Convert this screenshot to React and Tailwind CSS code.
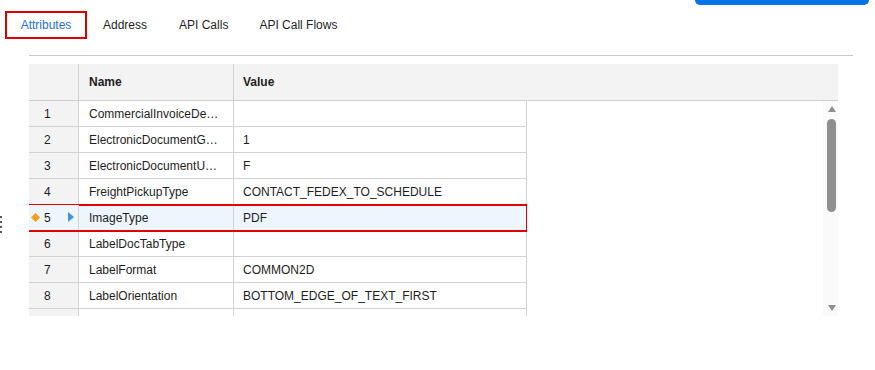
import React from 'react';

const tabs = ['Attributes', 'Address', 'API Calls', 'API Call Flows'];

const rows = [
  { n: 1, name: 'CommercialInvoiceDe…', value: '' },
  { n: 2, name: 'ElectronicDocumentG…', value: '1' },
  { n: 3, name: 'ElectronicDocumentU…', value: 'F' },
  { n: 4, name: 'FreightPickupType', value: 'CONTACT_FEDEX_TO_SCHEDULE' },
  { n: 5, name: 'ImageType', value: 'PDF', selected: true },
  { n: 6, name: 'LabelDocTabType', value: '' },
  { n: 7, name: 'LabelFormat', value: 'COMMON2D' },
  { n: 8, name: 'LabelOrientation', value: 'BOTTOM_EDGE_OF_TEXT_FIRST' },
  { n: 9, name: '', value: '' },
];

function Row({ row }) {
  const sel = row.selected;
  return (
    <div
      className={`relative flex h-[26px] shrink-0 border-b border-[#d2d2d2] ${
        sel ? 'z-10 bg-[#edf5fd] outline-2 outline-[#e00000] -outline-offset-1' : 'bg-white'
      }`}
    >
      <div className={`relative flex w-[50px] items-center border-r border-[#d2d2d2] pl-[15px] ${sel ? 'bg-[#edf5fd]' : 'bg-[#f3f3f3]'}`}>
        {sel && (
          <svg className="absolute left-[2px] top-[8px]" width="9" height="9" viewBox="0 0 9 9">
            <polygon points="4.5,0 9,4.5 4.5,9 0,4.5" fill="#f59e1b" />
          </svg>
        )}
        <span>{row.n < 9 ? row.n : ''}</span>
        {sel && (
          <svg className="absolute left-[39px] top-[7px]" width="6" height="10" viewBox="0 0 6 10">
            <polygon points="0,0 6,5 0,10" fill="#4a8fe0" />
          </svg>
        )}
      </div>
      <div className="flex w-[155px] items-center overflow-hidden whitespace-nowrap border-r border-[#d2d2d2] pl-[10px]">
        {row.name}
      </div>
      <div className="flex w-[293px] items-center whitespace-nowrap border-r border-[#d2d2d2] pl-[9px]">
        {row.value}
      </div>
    </div>
  );
}

export default function App() {
  return (
    <div className="relative h-[370px] w-[875px] overflow-hidden bg-white font-['Liberation_Sans',Arial,sans-serif] text-[12px] text-[#1e1e1e]">
      {/* cut-off button at the top right */}
      <div className="absolute left-[695px] top-0 h-[5px] w-[174px] rounded-b-[5px] bg-[#0572e6]" />

      {/* resize handle */}
      <div className="absolute left-[0px] top-[216px] flex flex-col gap-[3px]">
        <div className="h-[2px] w-[2px] bg-[#555]" />
        <div className="h-[2px] w-[2px] bg-[#555]" />
        <div className="h-[2px] w-[2px] bg-[#555]" />
        <div className="h-[2px] w-[2px] bg-[#555]" />
      </div>

      {/* Tabs */}
      <div className="flex items-center pl-[5px] pt-[11px]">
        {tabs.map((t, i) =>
          i === 0 ? (
            <div key={t} className="flex h-[28px] w-[82px] items-center justify-center border-2 border-[#e00000] text-[#1f6fe3]">
              {t}
            </div>
          ) : (
            <div key={t} className={`flex h-[28px] items-center ${i === 1 ? 'pl-[16px] pr-[32px]' : 'pr-[31px]'}`}>
              {t}
            </div>
          )
        )}
      </div>

      <div className="ml-[29px] mt-[16px] h-px w-[824px] bg-[#c8c8c8]" />

      {/* Table */}
      <div className="ml-[29px] mt-[8px] w-[809px]">
        <div className="flex h-[37px] border-b border-[#cfcfcf] bg-[#f3f3f3] font-bold">
          <div className="w-[50px] border-r border-[#cfcfcf]" />
          <div className="flex w-[155px] items-center border-r border-[#cfcfcf] pl-[10px]">Name</div>
          <div className="flex items-center pl-[9px]">Value</div>
        </div>
        <div className="flex h-[215px]">
          <div className="flex w-[498px] flex-col overflow-hidden">
            {rows.map((r) => (
              <Row key={r.n} row={r} />
            ))}
          </div>
          <div className="flex-1" />
          <div className="flex w-[15px] flex-col items-center bg-[#fafafa] pl-[2px]">
            <svg className="mt-[5px]" width="8" height="6" viewBox="0 0 8 6">
              <polygon points="4,0 8,6 0,6" fill="#8f8f8f" />
            </svg>
            <div className="mt-[7px] h-[93px] w-[9px] rounded-full bg-[#8f8f8f]" />
            <div className="flex-1" />
            <svg className="mb-[5px]" width="8" height="6" viewBox="0 0 8 6">
              <polygon points="0,0 8,0 4,6" fill="#8f8f8f" />
            </svg>
          </div>
        </div>
      </div>
    </div>
  );
}
